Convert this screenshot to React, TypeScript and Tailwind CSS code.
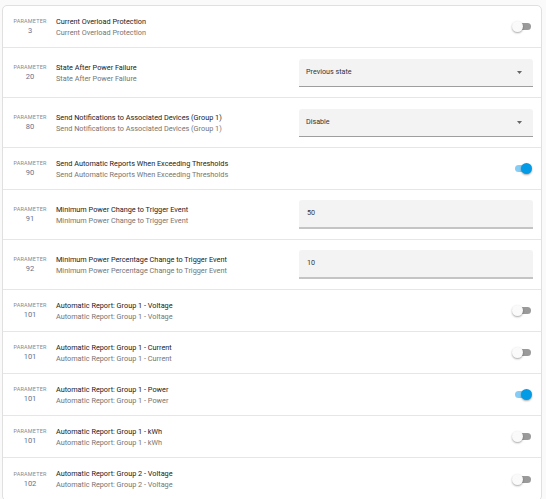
import React from "react";

type Param =
  | { id: number; label: string; kind: "toggle"; on: boolean }
  | { id: number; label: string; kind: "select"; value: string }
  | { id: number; label: string; kind: "input"; value: string };

const params: Param[] = [
  { id: 3, label: "Current Overload Protection", kind: "toggle", on: false },
  { id: 20, label: "State After Power Failure", kind: "select", value: "Previous state" },
  { id: 80, label: "Send Notifications to Associated Devices (Group 1)", kind: "select", value: "Disable" },
  { id: 90, label: "Send Automatic Reports When Exceeding Thresholds", kind: "toggle", on: true },
  { id: 91, label: "Minimum Power Change to Trigger Event", kind: "input", value: "50" },
  { id: 92, label: "Minimum Power Percentage Change to Trigger Event", kind: "input", value: "10" },
  { id: 101, label: "Automatic Report: Group 1 - Voltage", kind: "toggle", on: false },
  { id: 101, label: "Automatic Report: Group 1 - Current", kind: "toggle", on: false },
  { id: 101, label: "Automatic Report: Group 1 - Power", kind: "toggle", on: true },
  { id: 101, label: "Automatic Report: Group 1 - kWh", kind: "toggle", on: false },
  { id: 102, label: "Automatic Report: Group 2 - Voltage", kind: "toggle", on: false },
];

function Toggle({ on }: { on: boolean }) {
  return (
    <div className="relative w-[20px] h-[11px] mr-[1px]">
      <div
        className={`absolute left-[3px] top-[2px] w-[16px] h-[7px] rounded-full ${
          on ? "bg-[#86cdf5]" : "bg-[#9a9a9a]"
        }`}
      />
      <div
        className={`absolute top-0 w-[11px] h-[11px] rounded-full shadow-[0_1px_2px_rgba(0,0,0,0.35)] ${
          on ? "right-0 bg-[#039be5]" : "left-0 bg-[#fafafa]"
        }`}
      />
    </div>
  );
}

function Select({ value }: { value: string }) {
  return (
    <div className="w-[234px] h-[28px] bg-[#f3f3f3] rounded-t-[3px] border-b border-[#9e9e9e] flex items-center justify-between pl-[7px] pr-[11px]">
      <span className="text-[7.2px] text-[#333]">{value}</span>
      <svg width="5" height="3" viewBox="0 0 5 3">
        <path d="M0 0h5L2.5 3z" fill="#666" />
      </svg>
    </div>
  );
}

function Field({ value }: { value: string }) {
  return (
    <div className="w-[234px] h-[29px] bg-[#f3f3f3] rounded-t-[3px] border-b-2 border-[#c4c4c4] flex items-center pl-[8px]">
      <span className="text-[7.2px] text-[#333]">{value}</span>
    </div>
  );
}

function Row({ p, last }: { p: Param; last: boolean }) {
  const tall = p.kind !== "toggle";
  return (
    <div
      className={`flex items-center pl-[7px] pr-[8px] ${tall ? "h-[50px]" : "h-[42px]"} ${
        last ? "" : "border-b border-[#e6e6e6]"
      }`}
    >
      <div className="w-[40px] flex flex-col items-center">
        <span className="text-[5.5px] leading-[8px] tracking-[0.2px] text-[#8a8a8a]">PARAMETER</span>
        <span className="text-[7.5px] leading-[11px] text-[#5f7391]">{p.id}</span>
      </div>
      <div className="flex flex-col ml-[6px] flex-1">
        <span className="text-[7.3px] leading-[11px] text-[#212121]">{p.label}</span>
        <span className="text-[7.3px] leading-[11px] text-[#757575]">{p.label}</span>
      </div>
      {p.kind === "toggle" && <Toggle on={p.on} />}
      {p.kind === "select" && <Select value={p.value} />}
      {p.kind === "input" && <Field value={p.value} />}
    </div>
  );
}

export default function App() {
  return (
    <div className="w-[546px] h-[499px] overflow-hidden bg-[#fafafa] font-['Roboto',sans-serif] pt-[5px] pl-[2px]">
      <div className="w-[540px] bg-white border border-[#e0e0e0] rounded-[5px]">
        {params.map((p, i) => (
          <Row key={i} p={p} last={i === params.length - 1} />
        ))}
      </div>
    </div>
  );
}
